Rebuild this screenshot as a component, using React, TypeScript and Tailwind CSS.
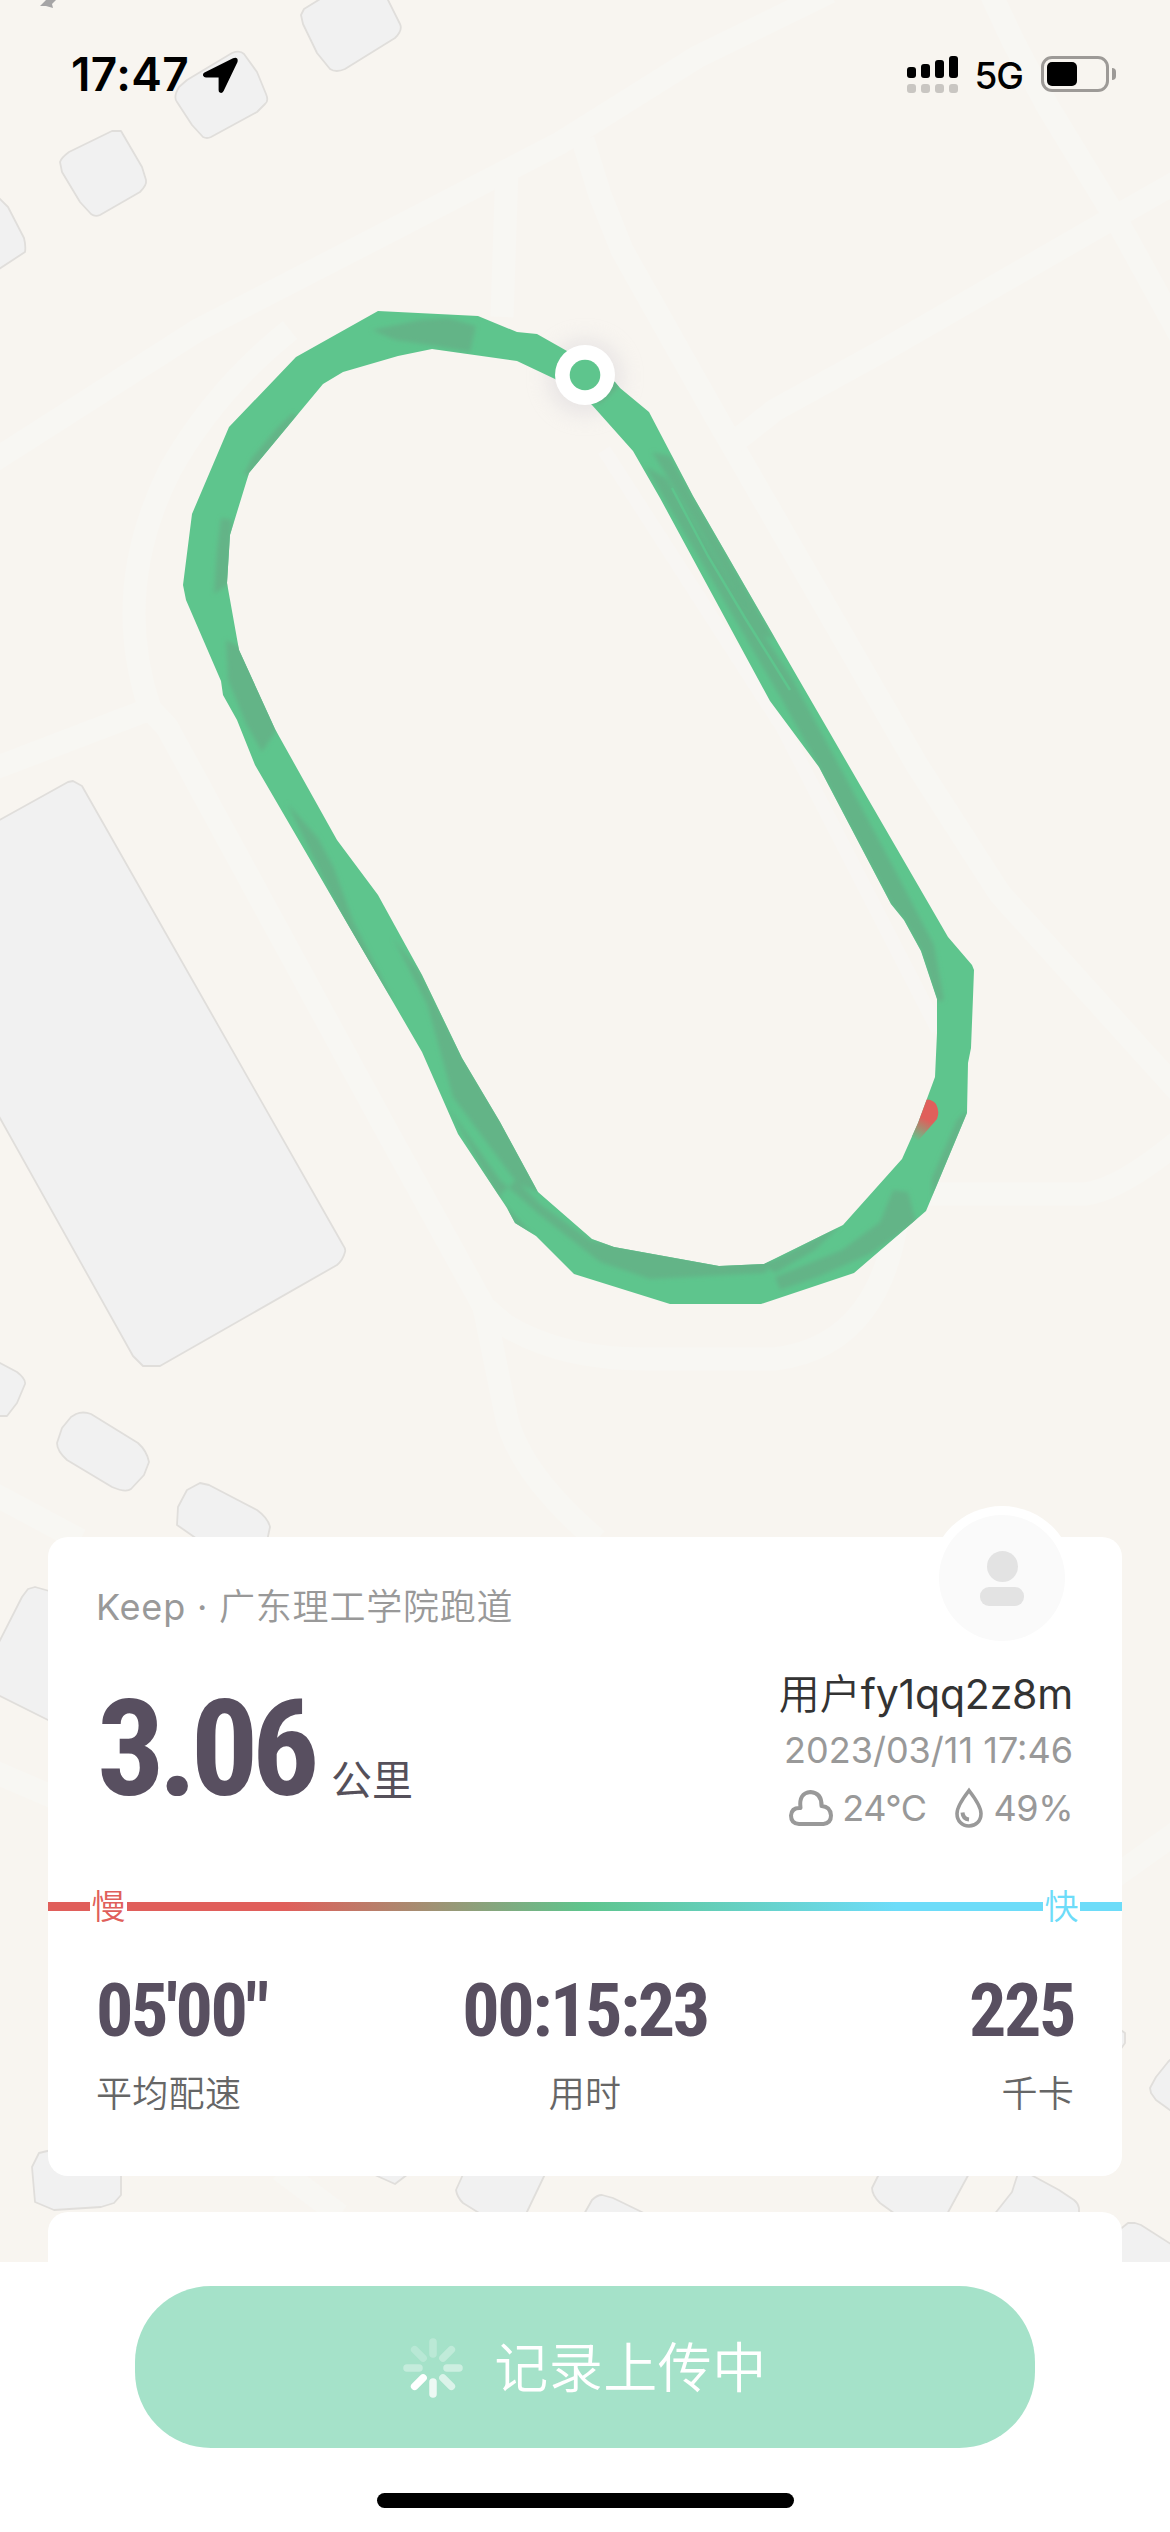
import React from "react";

const BUILDINGS = [
  "M301 15L304 9L325 -4H386L400 24Q403 30 395 38L345 69Q336 73 330 69L317 53L303 24Z",
  "M232 53Q240 50 244 54L257 72L266 94Q269 101 265 104L257 112L211 137Q207 139 203 137L192 125L177 102Q173 97 179 87L187 80Z",
  "M112 131H121L142 167L146 180Q147 185 140 192L100 215Q95 217 91 214L80 202L62 172L60 162Q61 158 69 152Z",
  "M-4 195L8 207L24 238Q26 246 25 252L-4 271Z",
  "M-4 822L68 782L73 781L82 786L343 1245Q346 1249 345 1252Q343 1260 337 1265L160 1366H143L133 1356L-4 1111Z",
  "M-4 1361L17 1372Q26 1379 25 1384L17 1403L7 1416H-4Z",
  "M76 1414Q83 1411 91 1414L138 1443Q147 1451 149 1462L144 1475L131 1489Q126 1493 112 1487L67 1460Q57 1451 57 1443L62 1428L71 1417Z",
  "M200 1483L209 1485L257 1510Q268 1518 270 1527L267 1541H200L177 1525L178 1507L187 1490Z",
  "M-4 1648L22 1597L28 1589L35 1587L60 1594V1726L-4 1694Z",
  "M60 2148L39 2153L32 2167L35 2202L54 2210L101 2207L114 2203L121 2195V2160Z",
  "M366 2171L395 2184L412 2171Z",
  "M465 2170L456 2190Q457 2197 463 2203L484 2216H525L547 2170Z",
  "M583 2216L592 2200Q597 2195 602 2195L613 2198L650 2216Z",
  "M881 2170L872 2188Q872 2195 880 2203L898 2216H946L971 2170Z",
  "M1019 2170L1012 2192L993 2216H1079V2208Q1078 2203 1074 2200L1059 2190L1022 2170Z",
  "M1174 2056L1168 2062L1156 2077L1150 2088L1151 2093L1156 2100L1174 2113Z",
  "M1118 2231L1128 2223H1135L1141 2225L1174 2246V2270H1118Z",
  "M1118 2028L1125 2033V2043L1118 2053Z",
];

const ROADS = [
  "M-10 463L198 330L392 230L560 143L697 57L830 -8",
  "M507 167L502 317",
  "M583 140L600 195L622 250L716 417L917 765L1000 894L1180 1093",
  "M728 447L775 410L884 350L1115 217L1180 180",
  "M990 -8L1014 43L1048 107L1115 217L1180 335",
  "M-10 770L150 709L167 727L383 1124L484 1307L505 1325Q560 1359 645 1359H775Q888 1345 900 1194H1085Q1120 1190 1180 1140",
  "M150 709Q110 590 170 470Q215 390 290 330",
  "M484 1307L505 1410Q515 1470 597 1540",
  "M-10 1492L80 1540",
  "M-10 1770L60 1800M1110 1880L1180 1830",
  "M280 2170L340 2215",
];

const TRACK =
  "M378 311L478 316L517 332L537 334L567 351L615 382L620 388L649 412L693 496L798 678L827 728L948 937L972 965L974 970L973 997L971 1048L968 1063L967 1113L926 1211L854 1273L761 1304H670L574 1274L536 1236L515 1223L507 1208L458 1134L422 1052L393 1002L255 765L237 720L223 695L221 681L186 600L183 585L192 514L229 427L296 357Z" +
  "M432 349L398 356L343 372L323 384L249 473L230 535L227 583L239 650L275 729L337 840L378 895L422 975L462 1058L500 1122L538 1192L592 1239L614 1247L719 1266L764 1264L837 1228L843 1225L902 1159L918 1123L935 1077L937 1033V999L921 951L904 920L891 904L819 767L770 701L660 498L633 451L592 405L555 379L517 361Z";

const SHADES = [
  "M372 330L420 320L448 318L476 326L470 352L436 346L395 340Z",
  "M293 413L277 428L252 458L244 474L250 476L297 416Z",
  "M221 518L232 520L230 583L214 594L217 550Z",
  "M226 640L242 648L277 729L262 752L246 724L228 680Z",
  "M287 803L318 838L334 868L353 921L393 1000L385 992L347 928Z",
  "M393 938L420 972L462 1056L502 1122L540 1193L517 1183L453 1097L427 1004Z",
  "M446 1104L500 1180L540 1215L600 1262L650 1279L766 1273L770 1260L719 1264L614 1245L590 1240L540 1204L516 1180L500 1195L505 1208L515 1225L536 1238L500 1200Z",
  "M775 1277L842 1250L880 1222L893 1190L908 1192L916 1222L870 1254L820 1276L780 1290Z",
  "M967 1110L957 1120L932 1178L932 1199L966 1118Z",
  "M763 1265L790 1252L842 1224L815 1250L775 1273Z",
  "M652 452L670 456L720 543L775 640L763 635L700 530Z",
  "M645 466L666 478L742 600L793 680L832 752L896 872L934 945L944 1000L937 1002L921 951L904 920L891 904L819 767L782 700L740 628Z",
  "M620 386L600 404L590 398L606 372Z",
];

function MapLayer() {
  return (
    <svg className="absolute inset-0" width="1170" height="2532" viewBox="0 0 1170 2532">
      <defs>
        <clipPath id="track">
          <path d={TRACK} clipRule="evenodd" />
        </clipPath>
        <filter id="soft" x="-5%" y="-5%" width="110%" height="110%">
          <feGaussianBlur stdDeviation="2" />
        </filter>
        <filter id="glow" x="-50%" y="-50%" width="200%" height="200%">
          <feGaussianBlur stdDeviation="10" />
        </filter>
        <linearGradient id="slow" gradientUnits="userSpaceOnUse" x1="930" y1="1110" x2="915" y2="1140">
          <stop offset="0.3" stopColor="#e05f5b" />
          <stop offset="1" stopColor="#5ec58d" />
        </linearGradient>
      </defs>
      <g fill="none" stroke="#f8f7f3" strokeWidth="23" strokeLinejoin="round">
        {ROADS.map((d) => (
          <path key={d} d={d} />
        ))}
      </g>
      <path
        d="M604 450L783 728L883 923L938 1030"
        fill="none"
        stroke="#f8f6f3"
        strokeWidth="14"
      />
      <g fill="#f1f1f1" stroke="#e0dedb" strokeWidth="1.8" strokeLinejoin="round">
        {BUILDINGS.map((d) => (
          <path key={d} d={d} />
        ))}
      </g>
      <path d="M40 6L46 0H56L52 4L53 8L46 6Z" fill="#a6a5a6" />
      <circle cx="585" cy="377" r="38" fill="#d9d5da" opacity="0.5" filter="url(#glow)" />
      <path d={TRACK} fill="#5ec58d" fillRule="evenodd" />
      <g clipPath="url(#track)">
        <g filter="url(#soft)" fill="#63b487">
          {SHADES.map((d) => (
            <path key={d} d={d} />
          ))}
        </g>
        <path d="M672 488L708 556L745 618L790 690" fill="none" stroke="#5ec58d" strokeWidth="2.5" />
        <path d="M924 1100Q931 1098 936 1104Q940 1112 937 1119L918 1141L911 1136Z" fill="url(#slow)" />
      </g>
      <circle cx="585" cy="375" r="30" fill="#fff" />
      <circle cx="585" cy="375" r="15.3" fill="#5ec58d" />
    </svg>
  );
}

function StatusBar() {
  return (
    <header className="relative flex h-[150px] items-start pt-[56px] pl-[71px] pr-[54px]">
      <span className="text-[46px] leading-[37px] font-semibold tracking-[0.4px] text-black">17:47</span>
      <svg className="ml-[13px] mt-px shrink-0" width="37" height="37" viewBox="0 0 37 37">
        <path
          d="M2.5 15.6L31 1.2Q36.6-.6 35.5 5L21.6 34Q20 37 17.8 35.6Q16.600 35 16.600 33V20.500H4Q1.800 20.400 1 18.600Q.6 16.600 2.500 15.600Z"
          fill="#000"
        />
      </svg>
      <div className="ml-auto flex items-start">
        <div className="flex h-[37px] items-end gap-[5px]">
          <Signal height="h-[11px]" />
          <Signal height="h-[14px]" />
          <Signal height="h-[18px]" />
          <Signal height="h-[22px]" />
        </div>
        <span className="ml-[16px] mt-[2px] text-[37px] leading-[36px] font-[450] tracking-[-1px] text-black">5G</span>
        <div className="ml-[18px] flex items-center">
          <div className="h-[36px] w-[68px] rounded-[11px] border-[3px] border-[#9d9a97] p-[3px]">
            <div className="h-full w-[30px] rounded-[5px] bg-black" />
          </div>
          <div className="ml-[3px] h-[12px] w-[4px] rounded-r-full bg-[#9d9a97]" />
        </div>
      </div>
    </header>
  );
}

function Signal({ height }: { height: string }) {
  return (
    <div className="flex flex-col gap-[6px]">
      <div className={`${height} w-[9px] rounded-[3px] bg-black`} />
      <div className="h-[9px] w-[9px] rounded-[3px] bg-[#c9c6c2]" />
    </div>
  );
}

function Stat({ value, label, align }: { value: string; label: string; align: string }) {
  return (
    <div className={`flex flex-1 flex-col ${align}`}>
      <span className="font-[Roboto] text-[74px] leading-[74px] font-bold tracking-[-2.4px] text-[#584f60] [font-stretch:75%]">
        {value}
      </span>
      <span className="mt-[24px] text-[36px] leading-[44px] font-[350] tracking-[0.3px] text-[#666]">{label}</span>
    </div>
  );
}

function Avatar() {
  return (
    <div className="absolute right-[48px] -top-[31px] flex h-[144px] w-[144px] items-center justify-center rounded-full bg-white">
      <div className="flex h-[126px] w-[126px] flex-col items-center gap-[5px] rounded-full bg-[#fafafa] pt-[36px]">
        <div className="h-[31px] w-[31px] rounded-full bg-[#e3e3e3]" />
        <div className="h-[19px] w-[44px] rounded-[9px] bg-[#e3e3e3]" />
      </div>
    </div>
  );
}

function SummaryCard() {
  return (
    <section className="relative mx-[48px] h-[639px] rounded-[20px] bg-white">
      <Avatar />
      <p className="px-[48px] pt-[46px] text-[36px] leading-[48px] font-[350] tracking-[0.8px] text-[#999]">
        <span className="font-normal">Keep · </span>广东理工学院跑道
      </p>
      <div className="flex h-[234px] justify-between px-[49px]">
        <div className="flex items-baseline pt-[39px]">
          <span className="font-[Roboto] text-[134px] leading-[160px] font-bold tracking-[-6.5px] text-[#584f60] [font-stretch:75%]">
            3.06
          </span>
          <span className="ml-[18px] text-[41px] text-[#55505a]">公里</span>
        </div>
        <div className="flex flex-col items-end pt-[37px]">
          <span className="text-[41px] leading-[52px] font-[350] text-[#333]">
            用户<span className="font-normal tracking-[-0.2px]">fy1qq2z8m</span>
          </span>
          <span className="mt-[6px] text-[36px] leading-[48px] font-normal text-[#999]">2023/03/11 17:46</span>
          <div className="mt-[10px] flex items-center text-[36px] leading-[48px] font-normal text-[#999]">
            <svg className="mr-[8px]" width="46" height="38" viewBox="0 0 46 38" fill="none" stroke="#999" strokeWidth="4" strokeLinejoin="round">
              <path d="M11 35Q3 34.500 3 26.500Q3.500 18.500 12.500 19Q10.500 4 22.500 3Q34 4 33.500 17Q42.500 17.500 43 26.500Q43 34 35.500 35Z" />
            </svg>
            <span className="tracking-[-0.5px]">24°C</span>
            <svg className="ml-[27px] mr-[10px]" width="30" height="42" viewBox="0 0 30 42" fill="none" stroke="#999" strokeWidth="3.600">
              <path d="M15 3.500C20 10 27 19 27 26.500C27 34 22 39 15 39S3 34 3 26.500C3 19 10 10 15 3.500Z" />
              <path d="M8.500 25.500Q9 32 15 32.500" strokeWidth="4" />
            </svg>
            <span className="tracking-[-0.5px]">49%</span>
          </div>
        </div>
      </div>
      <div className="mt-[21px] flex h-[40px] items-center justify-between bg-[linear-gradient(to_right,#e05f5b_22%,#5ec58d_50%,#6ddcf9_79%)] bg-[length:100%_9px] bg-center bg-no-repeat px-[42px]">
        <span className="w-[37px] bg-white pt-[2px] text-center text-[34px] leading-[40px] font-[350] text-[#e05f5b]">慢</span>
        <span className="w-[37px] bg-white pt-[2px] text-center text-[34px] leading-[40px] font-[350] text-[#6ddcf9]">快</span>
      </div>
      <div className="mt-[48px] flex px-[48px]">
        <Stat value={"05'00\""} label="平均配速" align="items-start" />
        <Stat value="00:15:23" label="用时" align="items-center" />
        <Stat value="225" label="千卡" align="items-end" />
      </div>
    </section>
  );
}

const SPOKES = [0.25, 0.3, 0.45, 0.6, 0.8, 1, 0.35, 0.22];

function UploadFooter() {
  return (
    <footer className="relative flex h-[270px] flex-col items-center bg-white pt-[24px]">
      <button className="flex h-[162px] w-[900px] items-center justify-center rounded-[76px] bg-[#a5e2c9] pt-[2px] text-[54px] font-[350] tracking-[0.5px] text-white">
        <svg className="mr-[31px]" width="60" height="60" viewBox="-30 -30 60 60" stroke="#fff" strokeWidth="7.500" strokeLinecap="round">
          {SPOKES.map((opacity, i) => (
            <line key={i} x1="0" y1="-14" x2="0" y2="-26" strokeOpacity={opacity} transform={`rotate(${i * 45})`} />
          ))}
        </svg>
        记录上传中
      </button>
      <div className="mt-[45px] h-[15px] w-[417px] rounded-full bg-black" />
    </footer>
  );
}

export default function App() {
  return (
    <main className="relative flex h-[2532px] w-[1170px] flex-col overflow-hidden bg-[#f8f5f0] font-['Inter','Noto_Sans_CJK_SC',sans-serif]">
      <MapLayer />
      <StatusBar />
      <div className="flex-1" />
      <SummaryCard />
      <section className="relative mx-[48px] mt-[36px] h-[50px] rounded-t-[20px] bg-white" />
      <UploadFooter />
    </main>
  );
}
